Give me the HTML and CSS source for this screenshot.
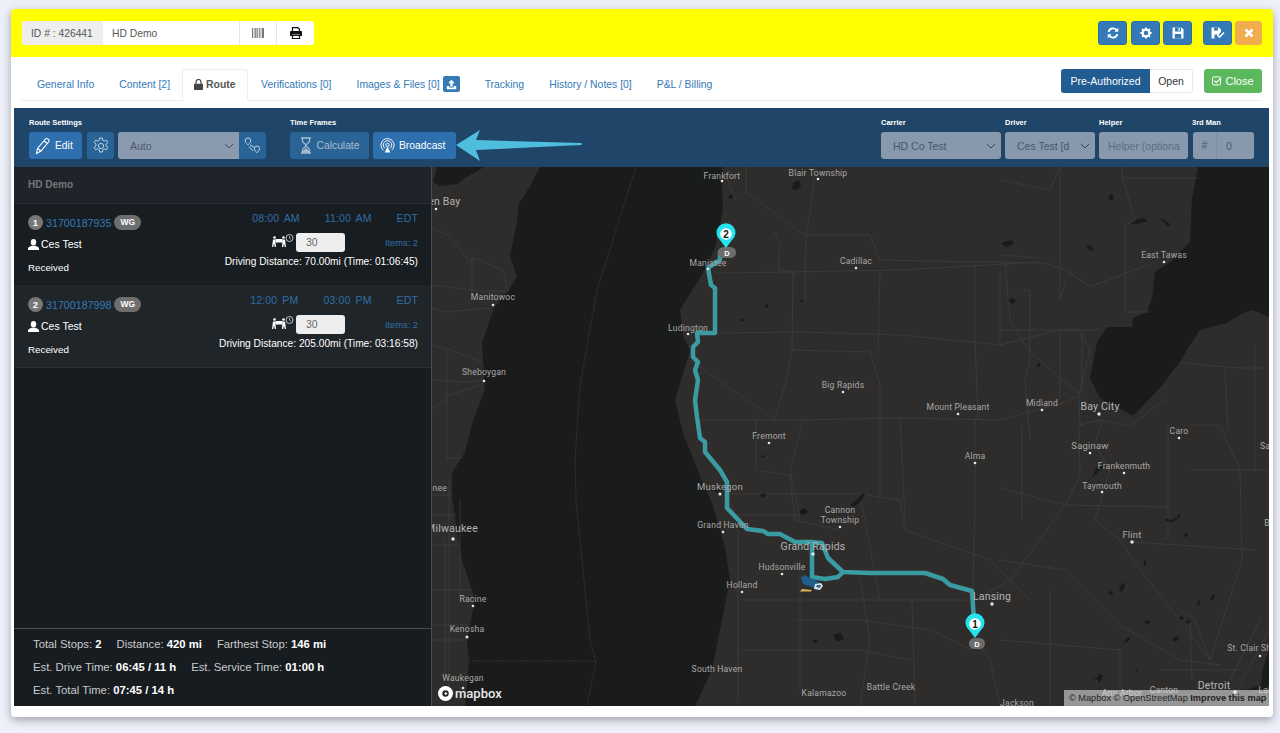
FILE: index.html
```html
<!DOCTYPE html>
<html lang="en">
<head>
    <meta charset="UTF-8">
    <title>Route</title>
    <link rel="stylesheet" href="styles.css">
</head>
<body>
<div class="window">

    <!-- yellow top bar -->
    <div class="top_bar">
        <div class="id_group">
            <span class="id_label">ID # : 426441</span>
            <span class="id_name">HD Demo</span>
            <span class="id_btn">
                <svg width="12" height="10" viewBox="0 0 12 10" fill="#777"><rect x="0" width="1" height="10"/><rect x="1.800" width=".7" height="10"/><rect x="3.200" width="1.300" height="10"/><rect x="5.300" width=".7" height="10"/><rect x="6.800" width="1" height="10"/><rect x="8.600" width=".7" height="10"/><rect x="10" width="2" height="10"/></svg>
            </span>
            <span class="id_btn id_btn_print">
                <svg width="12" height="12" viewBox="0 0 12 12"><path d="M2.500 4.500V.7h5.300l1.700 1.600v2.200M2.500 8.500h7v3h-7z" fill="none" stroke="#111" stroke-width="1.200"/><path d="M1 4h10a1 1 0 0 1 1 1v4H9.600V7.600H2.400V9H0V5a1 1 0 0 1 1-1z" fill="#111"/></svg>
            </span>
        </div>
        <div class="top_actions">
            <button class="square_btn square_btn_first">
                <svg width="12" height="12" viewBox="0 0 12 12" fill="none" stroke="#fff" stroke-width="1.900"><path d="M1.600 5A4.500 4.500 0 0 1 9.600 3.200"/><path d="M10.400 7A4.500 4.500 0 0 1 2.400 8.800"/><path d="M11.300.8v4H7.400z" fill="#fff" stroke="none"/><path d="M.7 11.200v-4h3.900z" fill="#fff" stroke="none"/></svg>
            </button>
            <button class="square_btn">
                <svg width="12" height="12" viewBox="0 0 12 12"><circle cx="6" cy="6" r="3.400" fill="none" stroke="#fff" stroke-width="2.200"/><path d="M6 .4v11.200M.4 6h11.200M2 2l8 8M10 2l-8 8" stroke="#fff" stroke-width="1.900" stroke-dasharray="1.900 7.400 1.900"/></svg>
            </button>
            <button class="square_btn">
                <svg width="12" height="12" viewBox="0 0 12 12"><path d="M1 .5h8.500L11.500 2.500V11.500H.5V1z" fill="#fff"/><rect x="3" y=".5" width="6" height="4" fill="#337ab7"/><rect x="6.500" y="1" width="1.300" height="2.800" fill="#fff"/><rect x="2.800" y="7" width="6.400" height="4.500" fill="#337ab7"/></svg>
            </button>
            <button class="square_btn square_btn_gap">
                <svg width="14" height="12" viewBox="0 0 14 12"><path d="M1 .5h7L10 2.500V5L7 8.500 6 7.500 3.500 7.500V11.500H.5V1z" fill="#fff"/><rect x="3" y=".5" width="4" height="3" fill="#337ab7"/><path d="M6.500 8l2 2 4.500-4.500" fill="none" stroke="#fff" stroke-width="1.700"/></svg>
            </button>
            <button class="square_btn cancel_btn">
                <svg width="10" height="10" viewBox="0 0 10 10"><path d="M1.500 1.500l7 7M8.500 1.500l-7 7" stroke="#fff" stroke-width="2.600"/></svg>
            </button>
        </div>
    </div>

    <!-- tabs -->
    <div class="tabs_row">
        <a class="tab">General Info</a>
        <a class="tab">Content [2]</a>
        <a class="tab tab_active">
            <svg width="9" height="11" viewBox="0 0 9 11"><path d="M2 5V3a2.500 2.500 0 0 1 5 0v2" fill="none" stroke="#444" stroke-width="1.200"/><rect y="4.800" width="9" height="6.200" rx=".8" fill="#444"/></svg>
            Route
        </a>
        <a class="tab">Verifications [0]</a>
        <a class="tab">Images &amp; Files [0]
            <span class="upload_badge">
                <svg width="11" height="11" viewBox="0 0 11 11" fill="#fff"><path d="M5.500.8L8.800 4.300H6.700V7.500H4.300V4.300H2.200z"/><path d="M.8 7H3.300V8.600H7.700V7H10.200V10.200H.8z"/></svg>
            </span>
        </a>
        <a class="tab">Tracking</a>
        <a class="tab">History / Notes [0]</a>
        <a class="tab">P&amp;L / Billing</a>
        <div class="status_group">
            <span class="status_on">Pre-Authorized</span>
            <span class="status_off">Open</span>
        </div>
        <button class="close_btn">
            <svg width="10" height="10" viewBox="0 0 10 10" fill="none" stroke="#fff"><rect x=".5" y=".9" width="8" height="8" rx="1"/><path d="M2.300 4.600l2 2L9 1.800" stroke-width="1.200"/></svg>
            Close
        </button>
    </div>

    <!-- route toolbar -->
    <div class="toolbar">
        <div class="tool_group">
            <label class="tool_label">Route Settings</label>
            <div class="tool_controls">
                <button class="tool_btn edit_btn">
                    <svg width="16" height="18" viewBox="0 0 16 18" fill="none" stroke="#fff" stroke-width="1.100"><path d="M1.500 16.500l1-5L10 2.500a2 2 0 0 1 3.500 2.500L6 14z"/><path d="M2.500 11.500L6 14M9 4l3.500 2.500"/></svg>
                    Edit
                </button>
                <button class="tool_btn gear_btn">
                    <svg width="18" height="18" viewBox="0 0 18 18" fill="none" stroke="#b9d3ea" stroke-width="1"><path d="M7.600 1h2.800l.4 2.300 1.500.8 2.100-.9 1.400 2.400-1.800 1.500v1.800l1.800 1.500-1.400 2.400-2.100-.9-1.500.9-.4 2.200H7.600l-.4-2.200-1.500-.9-2.100.9-1.400-2.400 1.800-1.500V7.100L2.200 5.600l1.400-2.400 2.100.9 1.500-.8z"/><circle cx="9" cy="9" r="2.600"/></svg>
                </button>
                <div class="auto_select">
                    <span>Auto</span>
                    <svg class="chevron" width="10" height="6" viewBox="0 0 10 6"><path d="M.7.700L5 5l4.300-4.300" fill="none" stroke="#3d4f63"/></svg>
                </div>
                <button class="tool_btn route_btn">
                    <svg width="17" height="17" viewBox="0 0 17 17" fill="none" stroke="#b9d3ea"><path d="M4 1a2.800 2.800 0 0 1 2.800 2.800C6.800 5.600 4 8 4 8S1.200 5.600 1.200 3.800A2.800 2.800 0 0 1 4 1z"/><path d="M13 9a2.600 2.600 0 0 1 2.600 2.600c0 1.700-2.600 4.200-2.600 4.200s-2.600-2.500-2.600-4.200A2.600 2.600 0 0 1 13 9z"/><path d="M6 8l4.500 2.500M5 9.500l4 4.500"/></svg>
                </button>
            </div>
        </div>
        <div class="tool_group">
            <label class="tool_label">Time Frames</label>
            <div class="tool_controls tool_controls_gap">
                <button class="tool_btn calc_btn">
                    <svg width="12" height="17" viewBox="0 0 12 17" fill="none" stroke="#a9bccd" stroke-width="1.300"><path d="M1 1h10M1 16h10M2.500 1v3c0 2 3.500 3 3.500 4.500S2.500 11 2.500 13v3M9.500 1v3C9.500 6 6 7 6 8.500S9.500 11 9.500 13v3"/><path d="M3 15l3-3 3 3z" fill="#a9bccd"/></svg>
                    Calculate
                </button>
                <button class="tool_btn cast_btn">
                    <svg width="15" height="17" viewBox="0 0 16 17" fill="none" stroke="#fff"><path d="M3.500 13.500a7 7 0 1 1 9 0"/><path d="M5.200 11.500a4.500 4.500 0 1 1 5.600 0"/><circle cx="8" cy="8" r="1.800"/><path d="M8 9.500l-3 6.500h6z" fill="#fff" stroke="none"/></svg>
                    Broadcast
                </button>
            </div>
        </div>
        <svg class="big_arrow" width="130" height="36" viewBox="0 0 130 36"><path d="M0 17L24 2 20 12 125 15Q127 16 125 17L20 22 24 33z" fill="#4fbedd"/></svg>

        <div class="tool_right">
            <div class="tool_group">
                <label class="tool_label">Carrier</label>
                <div class="dim_field carrier_field">HD Co Test
                    <svg class="chevron" width="10" height="6" viewBox="0 0 10 6"><path d="M.7.700L5 5l4.300-4.300" fill="none" stroke="#33465b"/></svg>
                </div>
            </div>
            <div class="tool_group">
                <label class="tool_label">Driver</label>
                <div class="dim_field driver_field">Ces Test [d
                    <svg class="chevron" width="10" height="6" viewBox="0 0 10 6"><path d="M.7.700L5 5l4.300-4.300" fill="none" stroke="#33465b"/></svg>
                </div>
            </div>
            <div class="tool_group">
                <label class="tool_label">Helper</label>
                <div class="dim_field helper_field">Helper (optiona</div>
            </div>
            <div class="tool_group">
                <label class="tool_label">3rd Man</label>
                <div class="dim_field man_field"><span class="man_hash">#</span><span class="man_value">0</span></div>
            </div>
        </div>
    </div>

    <div class="main_area">
        <!-- stops list -->
        <div class="stops_panel">
            <div class="stops_title">HD Demo</div>

            <div class="stop_row">
                <div class="stop_left">
                    <div class="stop_head"><span class="stop_num">1</span><a class="stop_id">31700187935</a><span class="stop_pill">WG</span></div>
                    <div class="stop_person">
                        <svg width="11" height="11" viewBox="0 0 11 11" fill="#fff"><ellipse cx="5.500" cy="3.200" rx="2.700" ry="3.200"/><path d="M0 11V9.300C0 8 2.500 7.300 3.800 6.800h3.400C8.500 7.300 11 8 11 9.300V11z"/></svg>
                        Ces Test
                    </div>
                    <div class="stop_status">Received</div>
                </div>
                <div class="stop_right">
                    <div class="stop_times"><span class="time_a">08:00 AM</span><span class="time_b">11:00 AM</span><span>EDT</span></div>
                    <div class="stop_service">
                        <svg class="mover_icon" width="22" height="13" viewBox="0 0 22 13" fill="#fff"><circle cx="2.500" cy="3.500" r="1.300"/><circle cx="11.500" cy="3.500" r="1.300"/><rect x="3.500" y="5" width="7" height="3.500"/><path d="M1 5.500h2.500v3L4 13H2.800L2 9.500 1.200 13H0zM10.500 5.500H13L14 13h-1.200L12 9.500 11.200 13H10z"/><circle cx="17.500" cy="4" r="3.500" fill="none" stroke="#fff" stroke-width=".7"/><path d="M17.500 2v2.200l1.400.8" fill="none" stroke="#fff" stroke-width=".6"/></svg>
                        <span class="service_input">30</span>
                        <span class="stop_items">Items: 2</span>
                    </div>
                    <div class="stop_drive">Driving Distance: 70.00mi (Time: 01:06:45)</div>
                </div>
            </div>

            <div class="stop_row stop_row_alt">
                <div class="stop_left">
                    <div class="stop_head"><span class="stop_num">2</span><a class="stop_id">31700187998</a><span class="stop_pill">WG</span></div>
                    <div class="stop_person">
                        <svg width="11" height="11" viewBox="0 0 11 11" fill="#fff"><ellipse cx="5.500" cy="3.200" rx="2.700" ry="3.200"/><path d="M0 11V9.300C0 8 2.500 7.300 3.800 6.800h3.400C8.500 7.300 11 8 11 9.300V11z"/></svg>
                        Ces Test
                    </div>
                    <div class="stop_status">Received</div>
                </div>
                <div class="stop_right">
                    <div class="stop_times"><span class="time_a">12:00 PM</span><span class="time_b">03:00 PM</span><span>EDT</span></div>
                    <div class="stop_service">
                        <svg class="mover_icon" width="22" height="13" viewBox="0 0 22 13" fill="#fff"><circle cx="2.500" cy="3.500" r="1.300"/><circle cx="11.500" cy="3.500" r="1.300"/><rect x="3.500" y="5" width="7" height="3.500"/><path d="M1 5.500h2.500v3L4 13H2.800L2 9.500 1.200 13H0zM10.500 5.500H13L14 13h-1.200L12 9.500 11.200 13H10z"/><circle cx="17.500" cy="4" r="3.500" fill="none" stroke="#fff" stroke-width=".7"/><path d="M17.500 2v2.200l1.400.8" fill="none" stroke="#fff" stroke-width=".6"/></svg>
                        <span class="service_input">30</span>
                        <span class="stop_items">Items: 2</span>
                    </div>
                    <div class="stop_drive">Driving Distance: 205.00mi (Time: 03:16:58)</div>
                </div>
            </div>

            <div class="stops_footer">
                <div class="footer_line"><span>Total Stops: <b>2</b></span><span>Distance: <b>420 mi</b></span><span>Farthest Stop: <b>146 mi</b></span></div>
                <div class="footer_line"><span>Est. Drive Time: <b>06:45 / 11 h</b></span><span>Est. Service Time: <b>01:00 h</b></span></div>
                <div class="footer_line"><span>Est. Total Time: <b>07:45 / 14 h</b></span></div>
            </div>
        </div>

        <!-- map, coordinates below are page pixels -->
        <div class="map_box">
            <svg class="map_svg" width="837" height="539" viewBox="432 167 837 539">
                <rect class="land" x="432" y="167" width="837" height="539"/>

                <!-- lake michigan -->
                <path class="water" d="M540 167L529 188 519 203 517 221 510 256 517 277 508 291 494 308 482 343 485 389 472 424 465 452 452 473 452 497 457 532 462 560 475 599 467 640 469 661 465 706H695L712 670 722 620 730 580 725 547 712 503 703 483 683 433 675 400 690 350 683 337 680 310 703 273 715 248 723 210 722 183 724 167z"/>
                <!-- green bay -->
                <path class="water" d="M437 167L433 182 440 186 458 184 465 178 484 167z"/>
                <!-- lake huron, saginaw bay -->
                <path class="water" d="M1198 167L1192 198 1190 242 1170 262 1155 272 1152 298 1147 312 1133 318 1132 327 1107 327 1097 342 1090 378 1100 398 1133 416 1160 388 1180 362 1190 345 1200 330 1227 323 1243 313 1253 310 1269 317V167z"/>
                <!-- lake st clair -->
                <path class="water" d="M1269 650L1263 668 1261 685 1240 692 1269 688z"/>

                <!-- state line on the lake -->
                <path class="lake_line" d="M636 167L597 290 580 385 575 460 576 500 590 640 596 662 587 706M469 661H596"/>

                <!-- roads -->
                <g class="roads">
                    <path d="M432 228L448 235 470 262 475 258 503 270 508 291M432 285L480 291 508 291M432 308L445 312 490 308M472 255V295"/>
                    <path d="M432 345L450 350 482 362M447 350V460M432 380L465 382 485 380M432 410L450 395 480 385M450 458H462M432 495H452M432 515H457M432 545H460M432 590H470M432 640H467M449 480V700M460 500V600M445 540V680M432 625H468"/>
                    <path d="M722 167L736 200M746 167V192L800 232 806 235 812 200 815 167M806 235L805 300M806 235H870L880 260 975 262 1000 262 1044 263 1066 270 1090 287 1150 264M775 232L780 245 778 270 793 272"/>
                    <path d="M716 273L790 272 900 270 1040 262M793 272L792 350 786 380 775 420 690 360M717 333L800 332 900 335 1000 345 1060 330M792 350L870 352 880 385 880 420M880 270L878 350M975 262L975 340 978 420M1000 345L1000 270"/>
                    <path d="M700 420H800L900 418 1000 420 1060 404 1079 396M756 420L756 470 790 475M803 420L790 470 800 520M880 420V500M900 418L905 520M975 420V500L973 590"/>
                    <path d="M727 494H860L900 500 905 530 990 560 1030 600M860 494L880 600M727 494L735 515H800M790 475L795 520 840 530M738 530V700M800 560V690M740 600H975M860 578L870 640 860 706M912 600L915 706M975 640L990 660 1000 706M795 620H860L930 630 972 650M740 650H860L910 660"/>
                    <path d="M1060 330L1079 330 1090 350 1079 394 1080 425 1100 420 1130 426 1165 400M1079 394L1030 352 1010 320 1005 262M1060 400L1060 330M1022 425L1022 520M1079 425L1080 475 1065 505 1010 580 975 600M1102 420L1095 445 1110 470 1095 520 1120 540 1133 560 1210 660M1132 542L1255 550M1168 425V540M1190 470H1269M1190 425L1220 425 1240 470 1242 560 1210 660M1255 345V470M1180 362L1200 365 1240 368 1269 368M1225 370L1228 430M1000 488L1065 505 1170 507M1000 560L1065 570 1120 625 1180 660 1220 665M1050 590L1050 706M1000 640L1120 650 1120 700M1180 610L1195 620 1210 660M1160 670L1240 670M1190 620L1192 680M1260 620L1230 680M1269 630L1240 685"/>
                    <path d="M1000 180L1050 190 1060 167M1060 167V300L1066 280M1122 167V176L1135 220 1125 225V310M1122 178H1198M1000 255L1040 258M1020 290H1030V360L1025 380 1030 440M1000 330H1060M1082 330V395M1100 330H1060M1150 312H1125"/>
                </g>

                <!-- small inland lakes -->
                <g class="ponds">
                    <path d="M793 183l6-3 2 6-4 4-5-1zM728 197l3-3 2 3-3 2zM800 300l3-1 1 2-3 1zM765 305l3-1v3l-3 1zM740 320l3-2 1 3-3 1z"/>
                    <path d="M1001 243l10-3 3 4-8 3zM1108 198l3-5 3 4-2 4zM1086 245l5 1 3 5-5-1zM1130 223l8-4 5-1 5 3-7 2-5 1zM1160 218l5 2 6 5-4 1zM1008 300l5-2 3 3-4 3zM1036 367l3-5 2 5zM1040 400l4-1 2 3-4 1z"/>
                    <path d="M800 510l5-2 3 4-4 3-4-1zM760 495l4-2 2 3-4 2zM820 545l3-1 2 3-3 1zM762 455l3 1-1 2-3-1zM850 505l8-6 5-6 2 2-5 7-6 5zM710 490l10-3 5 3-8 2z"/>
                    <path d="M1100 470l-8 8 4-10 8-3 5-2zM1165 518l6 2 6-3 4-6-2 7-6 4-7-1zM1183 535l4-2 1 3-3 1zM1144 560l3 2-3 5zM1108 592l4-1 1 3-3 2zM1120 587l3-5 2 4-3 6-3-2zM1196 605l3-5 2 3-3 3zM1178 618l4-2 2 3-3 1zM1185 622l4-2 2 1-2 3zM1145 620l5 1-1 3-4-1zM1172 640l4-4 3 2-3 4zM1210 600l3-6 2 2-2 4z"/>
                    <path d="M833 635l8-2 3 6-7 3zM813 640l4-1 1 3-4 1zM1130 640l-7 4 4-6 2-1zM1135 672l2-4 1 5zM1098 673l5 3-4 8-1-5-5 1 5-3z"/>
                </g>

                <!-- the route -->
                <path class="route" d="M720 252V260L708 268 711 285 715 288V333H697L698 342 693 347V357L698 362 695 370 698 380 695 400 697 417 700 438 705 442V452L720 470 727 482V508L747 529 763 531 768 534H780L795 542H810L822 543 828 558 843 572 870 573H925L943 579 950 585 972 591 974 620"/>
                <path class="route" d="M812 542V577L825 579 838 577 843 572"/>

                <!-- place names -->
                <g class="place_dots">
                    <circle cx="722" cy="181" r="1.300"/><circle cx="818" cy="179" r="1.300"/><circle cx="436" cy="209" r="1.300"/>
                    <circle cx="708" cy="269" r="1.300"/><circle cx="856" cy="268" r="1.300"/><circle cx="1164" cy="262" r="1.300"/>
                    <circle cx="493" cy="305" r="1.300"/><circle cx="688" cy="334" r="1.300"/><circle cx="484" cy="381" r="1.300"/>
                    <circle cx="843" cy="392" r="1.300"/><circle cx="958" cy="414" r="1.300"/><circle cx="1042" cy="410" r="1.300"/>
                    <circle cx="1099" cy="414" r="1.700"/><circle cx="1179" cy="438" r="1.300"/><circle cx="769" cy="443" r="1.300"/>
                    <circle cx="1090" cy="453" r="1.300"/><circle cx="975" cy="463" r="1.300"/><circle cx="1124" cy="473" r="1.300"/>
                    <circle cx="1102" cy="492" r="1.300"/><circle cx="720" cy="494" r="1.500"/><circle cx="840" cy="527" r="1.300"/>
                    <circle cx="723" cy="532" r="1.300"/><circle cx="453" cy="539" r="1.700"/><circle cx="1132" cy="542" r="1.700"/>
                    <circle cx="813" cy="554" r="1.700"/><circle cx="782" cy="574" r="1.300"/><circle cx="742" cy="592" r="1.300"/>
                    <circle cx="992" cy="604" r="1.700"/><circle cx="473" cy="606" r="1.300"/><circle cx="467" cy="637" r="1.500"/>
                    <circle cx="1260" cy="656" r="1.300"/><circle cx="463" cy="688" r="1.300"/><circle cx="1235" cy="692" r="1.700"/>
                </g>
                <g class="place_names">
                    <text x="722" y="179">Frankfort</text>
                    <text x="818" y="176">Blair Township</text>
                    <text class="place_lg" x="436" y="205">Green Bay</text>
                    <text x="708" y="266">Manistee</text>
                    <text x="856" y="264">Cadillac</text>
                    <text x="1164" y="258">East Tawas</text>
                    <text x="493" y="300">Manitowoc</text>
                    <text x="688" y="331">Ludington</text>
                    <text x="484" y="375">Sheboygan</text>
                    <text x="843" y="388">Big Rapids</text>
                    <text x="958" y="410">Mount Pleasant</text>
                    <text x="1042" y="406">Midland</text>
                    <text class="place_lg" x="1100" y="410">Bay City</text>
                    <text x="1179" y="434">Caro</text>
                    <text x="769" y="439">Fremont</text>
                    <text class="place_md" x="1090" y="449">Saginaw</text>
                    <text x="975" y="459">Alma</text>
                    <text x="1124" y="469">Frankenmuth</text>
                    <text x="1102" y="489">Taymouth</text>
                    <text x="422" y="491">Menomonee</text>
                    <text class="place_md" x="720" y="490">Muskegon</text>
                    <text x="840" y="513">Cannon</text>
                    <text x="840" y="523">Township</text>
                    <text x="723" y="528">Grand Haven</text>
                    <text class="place_lg" x="452" y="532">Milwaukee</text>
                    <text class="place_md" x="1132" y="538">Flint</text>
                    <text class="place_lg" x="813" y="550">Grand Rapids</text>
                    <text x="782" y="570">Hudsonville</text>
                    <text x="742" y="588">Holland</text>
                    <text class="place_lg" x="992" y="600">Lansing</text>
                    <text x="473" y="602">Racine</text>
                    <text x="467" y="632">Kenosha</text>
                    <text x="1258" y="651">St. Clair Shores</text>
                    <text x="717" y="672">South Haven</text>
                    <text x="463" y="681">Waukegan</text>
                    <text x="891" y="690">Battle Creek</text>
                    <text x="824" y="696">Kalamazoo</text>
                    <text x="1017" y="706">Jackson</text>
                    <text x="1122" y="696">Ann Arbor</text>
                    <text x="1164" y="693">Canton</text>
                    <text class="place_lg" x="1214" y="689">Detroit</text>
                    <text x="1268" y="693">Lake</text>
                    <text x="1270" y="449">Sand</text>
                    <text x="1267" y="526">B</text>
                </g>

                <!-- truck -->
                <g>
                    <path d="M801 578l3-3 15 7-3 7-13-5z" fill="#1f5d8c"/>
                    <path d="M815 584l6-1 2 3-3 4-6-1z" fill="#d9e4ea"/>
                    <path d="M817 585l4 0-1 3-4-1z" fill="#2a5f86"/>
                    <path d="M802 589l10 1-1 1.500-11 0z" fill="#d8b25c"/>
                </g>

                <!-- stop pins -->
                <g>
                    <rect class="pin_tag" x="718" y="247" width="18" height="11" rx="5.500"/>
                    <text class="pin_tag_text" x="727" y="255.500">D</text>
                    <path class="pin_shape" d="M726 248L720 240A9.500 9.500 0 1 1 732 240z"/>
                    <circle cx="726" cy="234" r="5.800" fill="#fff"/>
                    <text class="pin_num" x="726" y="237.500">2</text>

                    <rect class="pin_tag" x="969" y="638" width="16" height="11" rx="5.500"/>
                    <text class="pin_tag_text" x="977" y="646.500">D</text>
                    <path class="pin_shape" d="M975 638L969 630A9.500 9.500 0 1 1 981 630z"/>
                    <circle cx="975" cy="624" r="5.800" fill="#fff"/>
                    <text class="pin_num" x="975" y="627.500">1</text>
                </g>
            </svg>

            <div class="mapbox_logo">
                <svg width="15" height="15" viewBox="0 0 15 15"><circle cx="7.500" cy="7.500" r="7.500" fill="#fff"/><circle cx="7.500" cy="7.500" r="3.200" fill="#222"/><path d="M7.800 5.400l.8 1.500 1.300.6-1.300.6-.8 1.500-.8-1.500-1.300-.6 1.300-.6z" fill="#fff"/></svg>
                <span>mapbox</span>
            </div>
            <div class="map_credit">© Mapbox © OpenStreetMap <b>Improve this map</b></div>
        </div>
    </div>
</div>
</body>
</html>
```

FILE: styles.css
```css
* {
    box-sizing: border-box;
}

html, body {
    margin: 0;
    height: 100%;
}

body {
    font-family: "Liberation Sans", Arial, Helvetica, sans-serif;
    background-color: #eef0f9;
    overflow: hidden;
}

button {
    font-family: inherit;
    border: none;
    padding: 0;
}

.window {
    position: relative;
    margin: 9px 0 0 11px;
    width: 1262px;
    height: 708px;
    background-color: #fff;
    border-radius: 4px;
    box-shadow: 0 3px 9px rgba(60, 60, 80, 0.45);
    overflow: hidden;
}

/* top bar */
.top_bar {
    display: flex;
    justify-content: space-between;
    height: 48px;
    padding: 12px 11px 0 11px;
    background-color: #ffff00;
}

.id_group {
    display: flex;
    height: 24px;
    border-radius: 3px;
    background-color: #fff;
    font-size: 10.3px;
    color: #555;
    overflow: hidden;
}

.id_label {
    display: flex;
    align-items: center;
    width: 81px;
    padding-left: 9px;
    background-color: #eee;
}

.id_name {
    display: flex;
    align-items: center;
    width: 137px;
    padding-left: 9px;
    border-right: 1px solid #e5e5e5;
}

.id_btn {
    display: flex;
    align-items: center;
    justify-content: center;
    width: 37px;
    border-right: 1px solid #e5e5e5;
}

.id_btn_print {
    border-right: none;
}

.top_actions {
    display: flex;
    gap: 3px;
}

.square_btn {
    display: flex;
    align-items: center;
    justify-content: center;
    width: 29px;
    height: 24px;
    background-color: #337ab7;
    border: 1px solid #2e6da4;
    border-radius: 3px;
}

.square_btn_first {
    margin-right: 1px;
}

.square_btn_gap {
    margin-left: 8px;
}

.cancel_btn {
    width: 27px;
    background-color: #f0ad4e;
    border-color: #f0ad4e;
}

/* tabs */
.tabs_row {
    display: flex;
    align-items: flex-end;
    height: 44px;
    margin: 0 11px 0 10px;
    border-bottom: 1px solid #eee;
    font-size: 10.4px;
}

.tab {
    display: flex;
    align-items: center;
    height: 31px;
    padding: 0 12px 1px 16px;
    margin-left: -3px;
    color: #337ab7;
    white-space: nowrap;
}

.tab:first-child {
    margin-left: 0;
}

.tab_active {
    gap: 3px;
    margin-bottom: -1px;
    height: 32px;
    width: 66px;
    padding-left: 11px;
    margin-left: 0;
    margin-right: 0;
    color: #555;
    font-weight: bold;
    background-color: #fff;
    border: 1px solid #eee;
    border-bottom-color: #fff;
    border-radius: 3px 3px 0 0;
}

.tab_active svg {
    flex: none;
}

.upload_badge {
    display: flex;
    align-items: center;
    justify-content: center;
    width: 17px;
    height: 16px;
    margin-left: 3px;
    background-color: #337ab7;
    border-radius: 2px;
}

.status_group {
    display: flex;
    height: 24px;
    margin-left: auto;
    margin-bottom: 7px;
    align-self: flex-end;
    border-radius: 3px;
    overflow: hidden;
    font-size: 10.5px;
}

.status_on {
    display: flex;
    align-items: center;
    justify-content: center;
    width: 89px;
    background-color: #215c92;
    color: #fff;
}

.status_off {
    display: flex;
    align-items: center;
    justify-content: center;
    width: 43px;
    color: #333;
    border: 1px solid #e6e6e6;
    border-left: none;
    border-radius: 0 3px 3px 0;
}

.close_btn {
    display: flex;
    align-items: center;
    justify-content: center;
    gap: 3px;
    width: 58px;
    height: 24px;
    margin: 0 0 7px 11px;
    font-size: 11px;
    color: #fff;
    background-color: #5cb85c;
    border-radius: 3px;
}

/* toolbar */
.toolbar {
    position: relative;
    display: flex;
    gap: 24px;
    height: 59px;
    margin: 7px 4px 0 3px;
    padding: 10px 15px 0 15px;
    background-color: #1f4568;
}

.tool_label {
    display: block;
    height: 10px;
    margin-bottom: 4px;
    font-size: 7.5px;
    line-height: 10px;
    font-weight: bold;
    color: #fff;
}

.tool_controls {
    display: flex;
    gap: 5px;
}

.tool_controls_gap {
    gap: 4px;
}

.tool_btn {
    display: flex;
    align-items: center;
    justify-content: center;
    gap: 5px;
    height: 27px;
    font-size: 10.3px;
    color: #fff;
    background-color: #2e70ad;
    border-radius: 3px;
}

.edit_btn {
    justify-content: flex-start;
    width: 53px;
    padding-left: 6px;
    gap: 4px;
}

.gear_btn {
    width: 27px;
    margin-left: 0;
    background-color: #2a6496;
}

.auto_select {
    position: relative;
    display: flex;
    align-items: center;
    width: 121px;
    height: 27px;
    margin-left: -1px;
    padding-left: 12px;
    font-size: 10.5px;
    color: #4b5a6b;
    background-color: #8a9bb0;
    border-radius: 3px 0 0 3px;
}

.chevron {
    position: absolute;
    right: 5px;
    top: 11px;
}

.route_btn {
    width: 27px;
    margin-left: -5px;
    border-radius: 0 3px 3px 0;
    background-color: #2a6496;
}

.calc_btn {
    width: 79px;
    color: #a9bccd;
    background-color: #2a6496;
}

.cast_btn {
    justify-content: flex-start;
    width: 83px;
    padding-left: 7px;
    gap: 4px;
}

.big_arrow {
    position: absolute;
    left: 442px;
    top: 20px;
}

.tool_right {
    display: flex;
    gap: 4px;
    margin-left: auto;
}

.dim_field {
    position: relative;
    display: flex;
    align-items: center;
    height: 27px;
    padding-left: 12px;
    font-size: 10.5px;
    color: #46586c;
    background-color: #8899ad;
    border-radius: 3px;
}

.carrier_field {
    width: 120px;
}

.driver_field {
    width: 90px;
}

.helper_field {
    width: 89px;
    padding-left: 9px;
    color: #5d6f83;
    white-space: nowrap;
    overflow: hidden;
}

.man_field {
    width: 61px;
    padding-left: 0;
    margin-left: 1px;
}

.man_hash {
    width: 24px;
    text-align: center;
    line-height: 27px;
    border-right: 1px solid #7d8ea3;
}

.man_value {
    padding-left: 9px;
}

/* stops list */
.main_area {
    display: flex;
    height: 539px;
    margin: 0 4px 0 3px;
}

.stops_panel {
    position: relative;
    width: 418px;
    background-color: #171c20;
    border-right: 1px solid #4a4d50;
}

.stops_title {
    height: 37px;
    padding-left: 14px;
    font-size: 10px;
    font-weight: bold;
    line-height: 36px;
    color: #757779;
    background-color: #20242a;
    border-bottom: 1px solid #2c3035;
}

.stop_row {
    display: flex;
    justify-content: space-between;
    height: 82px;
    padding: 0 13px 0 14px;
    background-color: #181d21;
    border-bottom: 1px solid #22272c;
}

.stop_row_alt {
    background-color: #20252a;
    border-bottom-color: #2c3035;
}

.stop_head {
    display: flex;
    align-items: center;
    height: 15px;
    margin-top: 11px;
}

.stop_num {
    width: 15px;
    height: 15px;
    margin-right: 3px;
    font-size: 9.5px;
    font-weight: bold;
    line-height: 15px;
    text-align: center;
    color: #fff;
    background-color: #777;
    border-radius: 50%;
}

.stop_id {
    font-size: 10.7px;
    color: #337ab7;
}

.stop_pill {
    width: 27px;
    height: 15px;
    margin-left: 3px;
    font-size: 8.5px;
    font-weight: bold;
    line-height: 15px;
    text-align: center;
    color: #fff;
    background-color: #6e6e6e;
    border-radius: 8px;
}

.stop_person {
    display: flex;
    align-items: center;
    gap: 2px;
    height: 14px;
    margin-top: 7px;
    font-size: 10.5px;
    color: #fff;
}

.stop_status {
    margin-top: 11px;
    font-size: 9.8px;
    color: #fff;
}

.stop_right {
    display: flex;
    flex-direction: column;
    align-items: flex-end;
    width: 200px;
}

.stop_times {
    display: flex;
    justify-content: flex-end;
    height: 14px;
    margin-top: 8px;
    font-size: 10.5px;
    letter-spacing: 0.15px;
    word-spacing: 2px;
    color: #2f6ea7;
}

.time_a {
    margin-right: 25px;
}

.time_b {
    margin-right: 25px;
}

.stop_service {
    position: relative;
    display: flex;
    align-items: center;
    width: 100%;
    height: 20px;
    margin-top: 7px;
}

.mover_icon {
    position: absolute;
    left: 54px;
    top: 1px;
}

.service_input {
    position: absolute;
    left: 78px;
    top: 0;
    width: 49px;
    height: 19px;
    padding-left: 10px;
    font-size: 10.5px;
    line-height: 19px;
    color: #666;
    background-color: #eee;
    border-radius: 3px;
}

.stop_items {
    margin-left: auto;
    font-size: 9.3px;
    color: #2f6ea7;
}

.stop_drive {
    margin-top: 3px;
    font-size: 10.2px;
    white-space: nowrap;
    color: #fff;
}

.stops_footer {
    position: absolute;
    left: 0;
    right: 0;
    bottom: 0;
    height: 78px;
    padding: 4px 0 0 19px;
    background-color: #171c20;
    border-top: 1px solid #4a4d50;
}

.footer_line {
    display: flex;
    gap: 15px;
    height: 23px;
    font-size: 11.3px;
    line-height: 23px;
    color: #c9cbcc;
}

.footer_line b {
    color: #fff;
}

/* map */
.map_box {
    position: relative;
    width: 837px;
    height: 539px;
    overflow: hidden;
}

.map_svg {
    display: block;
}

.land {
    fill: #2e2d2c;
}

.water {
    fill: #1a1c1c;
}

.lake_line {
    fill: none;
    stroke: #3a3b3b;
    stroke-width: 0.8;
    stroke-dasharray: 2 1;
}

.roads path {
    fill: none;
    stroke: #3f3e3d;
    stroke-width: 0.8;
}

.ponds path {
    fill: #191b1b;
}

.route {
    fill: none;
    stroke: #3a9ba3;
    stroke-width: 4.5;
    stroke-linejoin: round;
    stroke-linecap: round;
}

.place_dots circle {
    fill: #e6e6e6;
}

.place_names text {
    font-family: Roboto, "Liberation Sans", sans-serif;
    font-size: 8.6px;
    text-anchor: middle;
    fill: #a8a8a8;
    letter-spacing: 0.2px;
}

.place_names .place_md {
    font-size: 9.5px;
}

.place_names .place_lg {
    font-size: 10.5px;
    fill: #b5b5b5;
}

.pin_shape {
    fill: #26e3f0;
}

.pin_tag {
    fill: #6c6c6c;
}

.pin_tag_text {
    font-size: 7.5px;
    font-weight: bold;
    text-anchor: middle;
    fill: #fff;
}

.pin_num {
    font-size: 10px;
    font-weight: bold;
    text-anchor: middle;
    fill: #111;
}

.mapbox_logo {
    position: absolute;
    left: 6px;
    bottom: 5px;
    display: flex;
    align-items: center;
    gap: 2px;
    font-family: Roboto, "Liberation Sans", sans-serif;
    font-size: 13px;
    font-weight: 500;
    color: #e8e8e8;
}

.map_credit {
    position: absolute;
    right: 0;
    bottom: 0;
    width: 205px;
    height: 16px;
    padding-left: 5px;
    font-size: 9.2px;
    line-height: 16px;
    white-space: nowrap;
    color: #222;
    background-color: rgba(255, 255, 255, 0.5);
}
```
